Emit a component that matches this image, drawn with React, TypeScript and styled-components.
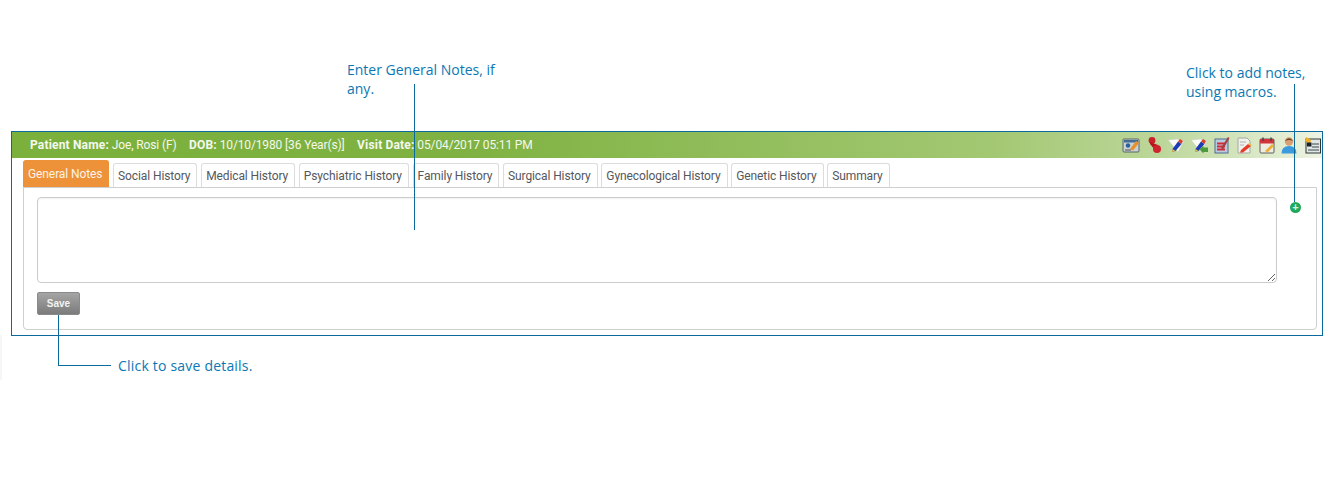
import React from "react";
import styled, { createGlobalStyle } from "styled-components";

const GlobalStyle = createGlobalStyle`
  html, body {
    margin: 0;
    padding: 0;
    background: #ffffff;
    font-family: Roboto, "Liberation Sans", sans-serif;
  }
`;

const Page = styled.div`
  position: relative;
  width: 1329px;
  height: 488px;
  padding: 131px 0 0 11px;
  box-sizing: border-box;
  overflow: hidden;
`;

const Frame = styled.div`
  width: 1312px;
  height: 205px;
  box-sizing: border-box;
  border: 1px solid #0b6a9b;
  display: flex;
  flex-direction: column;
`;

const Header = styled.div`
  height: 26px;
  display: flex;
  align-items: center;
  justify-content: space-between;
  padding: 0 1px 0 18px;
  background: linear-gradient(90deg, #7bb03c 0%, #7fb242 35%, #a3c873 75%, #bdd79b 88%, #eef4e4 100%);
  color: #f4f8ee;
  font-size: 12px;
`;

const PatientInfo = styled.div`
  display: flex;
  gap: 12.5px;
  white-space: nowrap;
  letter-spacing: -0.13px;
`;

const Label = styled.b`
  font-weight: 700;
  letter-spacing: 0.17px;
`;

const IconRow = styled.div`
  display: flex;
  align-items: center;
  gap: 4.6px;
`;

const IconSlot = styled.svg`
  width: 18px;
  height: 18px;
  display: block;
  filter: blur(0.35px);
`;

const Body = styled.div`
  flex: 1;
  padding: 2px 5px 5px 11px;
  display: flex;
  flex-direction: column;
`;

const TabBar = styled.div`
  display: flex;
  align-items: flex-end;
  height: 27px;
  gap: 3.7px;
`;

const Tab = styled.div<{ $active?: boolean }>`
  box-sizing: border-box;
  height: ${(p) => (p.$active ? "27px" : "24px")};
  display: flex;
  align-items: center;
  padding: ${(p) => (p.$active ? "0 6px 1px 4px" : "0 6px 0 4px")};
  font-size: 12px;
  letter-spacing: -0.1px;
  white-space: nowrap;
  border-radius: 3px 3px 0 0;
  color: ${(p) => (p.$active ? "#fdf3e6" : "#55575c")};
  background: ${(p) => (p.$active ? "#ed9238" : "#ffffff")};
  border: 1px solid ${(p) => (p.$active ? "#ed9238" : "#dcdcdc")};
  border-bottom: none;
`;

const Panel = styled.div`
  flex: 1;
  box-sizing: border-box;
  border: 1px solid #cfcfcf;
  border-radius: 0 0 4px 4px;
  padding: 9px 39px 0 13px;
  display: flex;
  flex-direction: column;
  align-items: flex-start;
  gap: 9px;
`;

const NotesArea = styled.textarea`
  width: 100%;
  height: 86px;
  box-sizing: border-box;
  display: block;
  border: 1px solid #cccccc;
  border-radius: 4px;
  box-shadow: inset 0 1px 2px rgba(0, 0, 0, 0.06);
  outline: none;
  resize: both;
  margin: 0;
`;

const SaveButton = styled.button`
  width: 43px;
  height: 23px;
  padding: 0;
  border: 1px solid #8a8a8a;
  border-radius: 2px;
  background: linear-gradient(180deg, #a5a5a5 0%, #7b7b7b 100%);
  color: #f2f2f2;
  font-family: "Liberation Sans", Arial, sans-serif;
  font-size: 10px;
  font-weight: 700;
`;

const AddButton = styled.div`
  position: absolute;
  left: 1290px;
  top: 202px;
  width: 11px;
  height: 11px;
  border-radius: 50%;
  background: #1fa95c;
  display: flex;
  align-items: center;
  justify-content: center;
  color: #d5f1e1;
  font: 700 11px/11px "Liberation Sans", sans-serif;
`;

const Note = styled.div<{ $left: number; $top: number; $width: number; $spacing?: number }>`
  position: absolute;
  left: ${(p) => p.$left}px;
  top: ${(p) => p.$top}px;
  width: ${(p) => p.$width}px;
  color: #0a78b4;
  font-family: "Open Sans", "Noto Sans", sans-serif;
  font-size: 14px;
  line-height: 19px;
  letter-spacing: ${(p) => p.$spacing ?? 0}px;
`;

const Leader = styled.div<{ $left: number; $top: number; $width: number; $height: number }>`
  position: absolute;
  left: ${(p) => p.$left}px;
  top: ${(p) => p.$top}px;
  width: ${(p) => p.$width}px;
  height: ${(p) => p.$height}px;
  background: #0b6a9b;
`;

const EdgeMark = styled.div`
  position: absolute;
  left: 0;
  top: 335px;
  width: 2px;
  height: 45px;
  background: #f6f6f6;
`;

const tabs = [
  "General Notes",
  "Social History",
  "Medical History",
  "Psychiatric History",
  "Family History",
  "Surgical History",
  "Gynecological History",
  "Genetic History",
  "Summary",
];

const Pencil = () => (
  <>
    <path d="M1 4 L10 3 L17 5 L11 16 Z" fill="#fbfbf6" stroke="#c2c7b8" strokeWidth="0.5" />
    <path d="M5.5 13 L11 5.5 L14.5 8 L8.5 15 L5 16 Z" fill="#1c3cb4" />
    <path d="M11 5.5 L13 3 L16 5 L14.5 8 Z" fill="#d8402c" />
    <path d="M5 16 L5.5 13 L8.5 15 Z" fill="#f2c53f" />
  </>
);

const icons = [
  <>
    <rect x="1" y="3" width="16" height="13" rx="1" fill="#c9d2d4" stroke="#5a6468" />
    <rect x="2" y="4" width="14" height="2.5" fill="#3f6d93" />
    <circle cx="6" cy="9.5" r="2.2" fill="#2e5f96" />
    <path d="M3 14 H9" stroke="#4a4f55" />
    <path d="M8 13 L14 5 L17 7 L11 14.5 Z" fill="#e8902c" />
  </>,
  <>
    <circle cx="7" cy="4.5" r="3.4" fill="#c9202c" />
    <path d="M5 6 L13 9 L10 14 L5 8 Z" fill="#b8141f" />
    <circle cx="12" cy="13" r="4" fill="#cf2430" />
  </>,
  <Pencil />,
  <>
    <Pencil />
    <path d="M9.5 13.5 L13.5 9.5 L13.5 11.5 L18 11.5 L18 16 L13.5 16 L13.5 17.5 Z" fill="#4d9a3a" />
  </>,
  <>
    <rect x="2" y="3" width="13" height="14" fill="#b8cce0" stroke="#4f6c90" />
    <path d="M4 7.5 H12 M4 10.5 H12 M4 13.5 H12" stroke="#d32b35" strokeWidth="2" />
    <path d="M8 12 L15 1 L16.5 2 L10 13.5 Z" fill="#a83c44" />
  </>,
  <>
    <path d="M3 2 H12 L15 5 V17 H3 Z" fill="#f1f1ec" stroke="#a4a9a1" />
    <path d="M5 6 H11 M5 9 H9" stroke="#b0b0b0" />
    <path d="M6 14 L13 8 L16 10 L8 16.5 L5 16.5 Z" fill="#e63b2a" />
    <path d="M13 8 L16 10 L17 9 L14 7 Z" fill="#f0c040" />
  </>,
  <>
    <rect x="2" y="3" width="14" height="14" rx="1" fill="#f0ecdf" stroke="#5f5f5f" />
    <rect x="2" y="3" width="14" height="4.5" fill="#d3343a" />
    <path d="M5 1.5 V5 M13 1.5 V5" stroke="#444" strokeWidth="1.4" />
    <path d="M7 15 L14 8 L16 10 L9.5 16.5 Z" fill="#e9b23a" />
  </>,
  <>
    <circle cx="9" cy="5.5" r="4.2" fill="#d89f72" />
    <path d="M4.8 5 Q9 -0.5 13.2 5 Q9 3 4.8 5 Z" fill="#6b4425" />
    <path d="M1.5 17.5 Q1.5 10 9 10 Q16.5 10 16.5 17.5 Z" fill="#3b9bdc" />
  </>,
  <>
    <rect x="3" y="3" width="14.5" height="14" fill="#dfe7e7" stroke="#2f3636" />
    <path d="M9 8 H16 M9 11 H16 M5 14 H16" stroke="#3f4747" />
    <path d="M3 1 L8 4 L7 8 L2 5 Z" fill="#f0b020" />
    <rect x="4" y="6.5" width="4.5" height="4" fill="#1a2226" />
  </>,
];

export default function App() {
  return (
    <Page>
      <GlobalStyle />
      <Frame>
        <Header>
          <PatientInfo>
            <span>
              <Label>Patient Name:</Label> Joe, Rosi (F)
            </span>
            <span>
              <Label>DOB:</Label> 10/10/1980 [36 Year(s)]
            </span>
            <span>
              <Label>Visit Date:</Label> 05/04/2017 05:11 PM
            </span>
          </PatientInfo>
          <IconRow>
            {icons.map((icon, i) => (
              <IconSlot key={i} viewBox="0 0 18 18">
                {icon}
              </IconSlot>
            ))}
          </IconRow>
        </Header>
        <Body>
          <TabBar>
            {tabs.map((t, i) => (
              <Tab key={t} $active={i === 0}>
                {t}
              </Tab>
            ))}
          </TabBar>
          <Panel>
            <NotesArea />
            <SaveButton>Save</SaveButton>
          </Panel>
        </Body>
      </Frame>

      <AddButton>+</AddButton>

      <Note $left={347} $top={60} $width={165}>
        Enter General Notes, if any.
      </Note>
      <Leader $left={414} $top={84} $width={1} $height={146} />

      <Note $left={1186} $top={63} $width={135}>
        Click to add notes, using macros.
      </Note>
      <Leader $left={1294} $top={84} $width={1} $height={118} />

      <Note $left={118} $top={356} $width={170} $spacing={0.2}>
        Click to save details.
      </Note>
      <Leader $left={58} $top={315} $width={1} $height={51} />
      <Leader $left={58} $top={365} $width={53} $height={1} />
      <EdgeMark />
    </Page>
  );
}
